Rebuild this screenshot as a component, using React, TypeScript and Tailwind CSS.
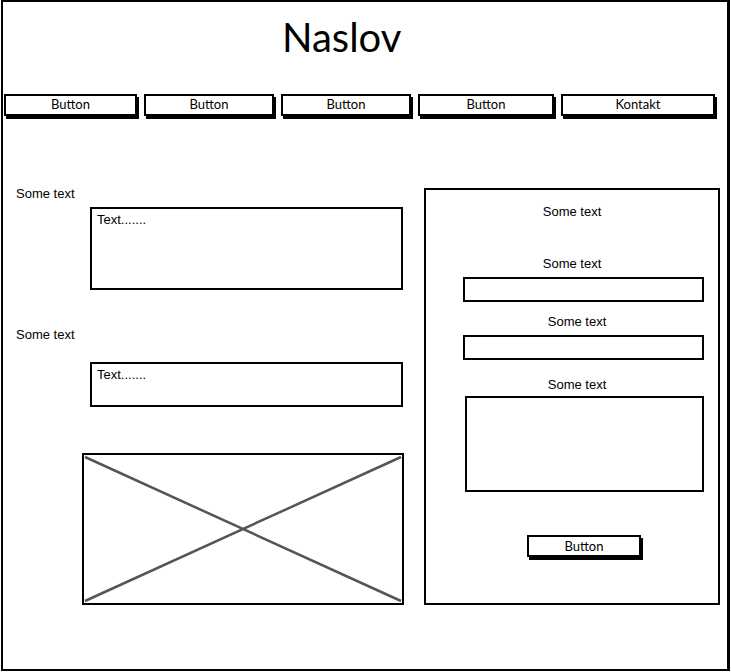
import React from "react";

const sketch = { fontFamily: "Lato, 'Open Sans', sans-serif" };
const arial = { fontFamily: "'Liberation Sans', Arial, sans-serif" };

function NavButton({ label, w }: { label: string; w: string }) {
  return (
    <div
      className={`${w} h-[22px] border-2 border-black bg-white shadow-[2px_3px_0_#000] flex items-center justify-center text-[13px] text-black`}
      style={sketch}
    >
      {label}
    </div>
  );
}

export default function App() {
  return (
    <div className="bg-white w-[731px] h-[672px]">
      <div className="ml-[1px] w-[729px] h-[671px] border-2 border-black border-r-[3px] flex flex-col bg-white">
        <div className="h-[92px] pl-[279px] pt-[11px]">
          <div className="text-[40px] leading-[48px] text-black" style={sketch}>
            Naslov
          </div>
        </div>
        <div className="flex pl-[1px] gap-[7px]">
          <NavButton label="Button" w="w-[133px]" />
          <NavButton label="Button" w="w-[130px]" />
          <NavButton label="Button" w="w-[130px]" />
          <NavButton label="Button" w="w-[136px]" />
          <NavButton label="Kontakt" w="w-[154px]" />
        </div>
        <div className="flex mt-[2px]">
          <div className="w-[421px] pl-[13px] flex flex-col" style={arial}>
            <div className="mt-[68px] text-[13px] leading-[16px] text-black">Some text</div>
            <div className="mt-[5px] ml-[74px] w-[313px] h-[83px] border-2 border-black px-[5px] pt-[3px] text-[13px] leading-[16px] text-black">
              Text.......
            </div>
            <div className="mt-[37px] text-[13px] leading-[16px] text-black">Some text</div>
            <div className="mt-[19px] ml-[74px] w-[313px] h-[45px] border-2 border-black px-[5px] pt-[3px] text-[13px] leading-[16px] text-black">
              Text.......
            </div>
            <div className="mt-[46px] ml-[66px] w-[322px] h-[152px] border-2 border-black">
              <svg width="100%" height="100%" viewBox="0 0 318 148" preserveAspectRatio="none">
                <line x1="1" y1="2" x2="317" y2="146" stroke="#555" strokeWidth="2.5" />
                <line x1="1" y1="146" x2="317" y2="2" stroke="#555" strokeWidth="2.5" />
              </svg>
            </div>
          </div>
          <div
            className="mt-[70px] w-[296px] h-[417px] border-2 border-black flex flex-col text-[13px] leading-[16px] text-black"
            style={arial}
          >
            <div className="mt-[14px] text-center">Some text</div>
            <div className="mt-[36px] text-center">Some text</div>
            <div className="mt-[5px] ml-[37px] w-[241px] h-[25px] border-2 border-black" />
            <div className="mt-[12px] text-center pl-[10px]">Some text</div>
            <div className="mt-[5px] ml-[37px] w-[241px] h-[25px] border-2 border-black" />
            <div className="mt-[17px] text-center pl-[10px]">Some text</div>
            <div className="mt-[3px] ml-[39px] w-[239px] h-[96px] border-2 border-black" />
            <div className="mt-[43px] ml-[101px]">
              <div
                className="w-[114px] h-[22px] border-2 border-black bg-white shadow-[2px_3px_0_#000] flex items-center justify-center text-[13px]"
                style={sketch}
              >
                Button
              </div>
            </div>
          </div>
        </div>
      </div>
    </div>
  );
}
